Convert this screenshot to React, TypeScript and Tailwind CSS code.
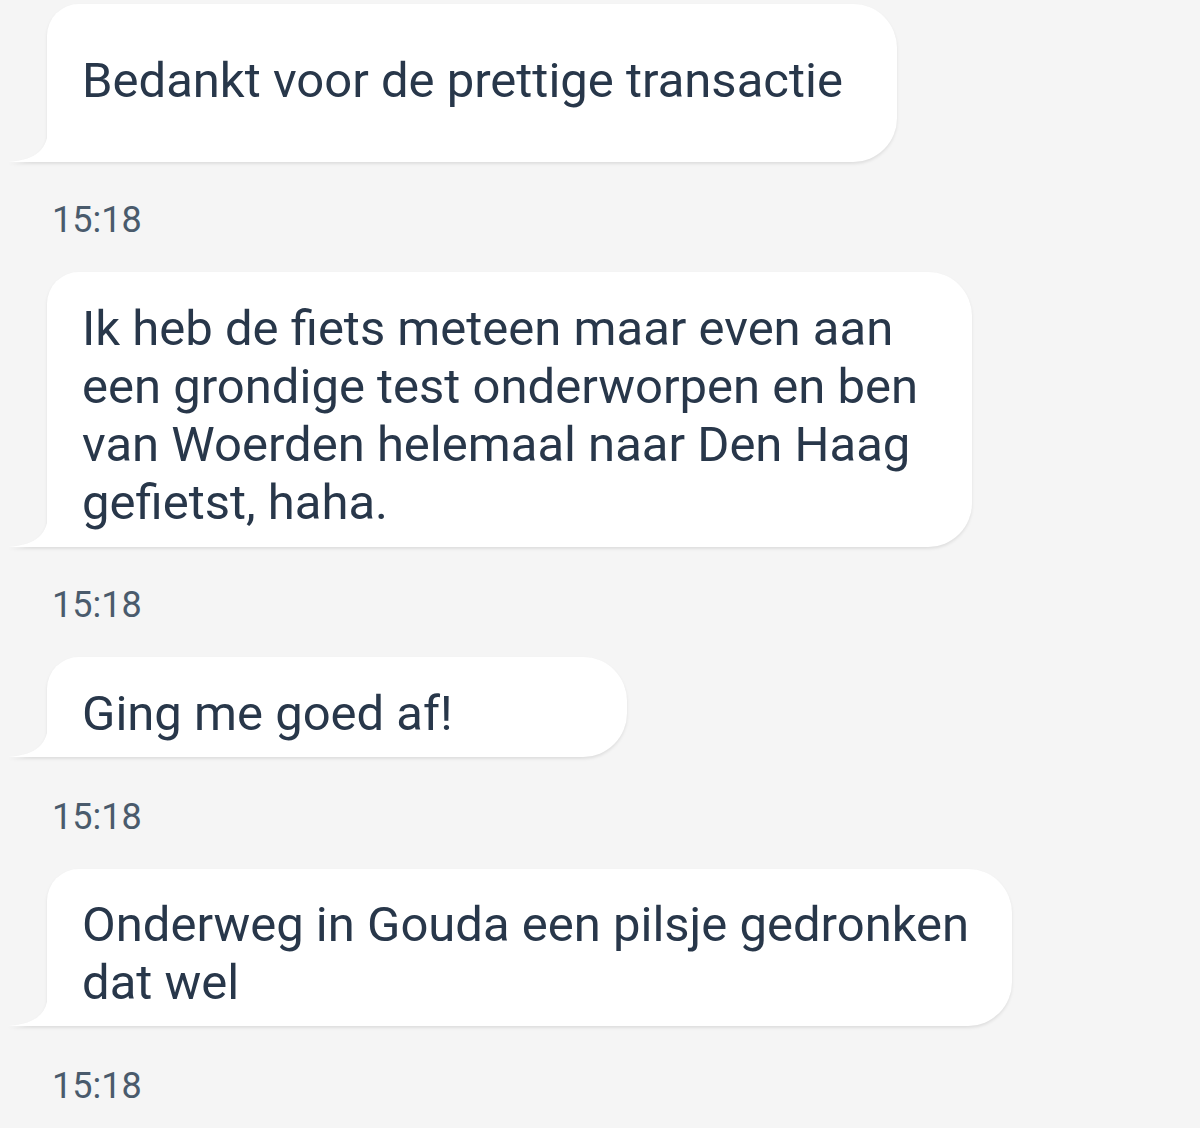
import React from 'react';

type Msg = {
  lines: string[];
  width: string;
  pad: string;
  gap: string;
};

const messages: Msg[] = [
  { lines: ['Bedankt voor de prettige transactie'], width: 'w-[850px]', pad: 'pt-[48px] pb-[52px]', gap: 'mt-[40px]' },
  {
    lines: [
      'Ik heb de fiets meteen maar even aan',
      'een grondige test onderworpen en ben',
      'van Woerden helemaal naar Den Haag',
      'gefietst, haha.',
    ],
    width: 'w-[925px]',
    pad: 'pt-[28px] pb-[15px]',
    gap: 'mt-[40px]',
  },
  { lines: ['Ging me goed af!'], width: 'w-[580px]', pad: 'pt-[28px] pb-[14px]', gap: 'mt-[42px]' },
  {
    lines: ['Onderweg in Gouda een pilsje gedronken', 'dat wel'],
    width: 'w-[965px]',
    pad: 'pt-[27px] pb-[14px]',
    gap: 'mt-[42px]',
  },
];

const Bubble: React.FC<{ msg: Msg }> = ({ msg }) => (
  <div className="relative ml-[47px] w-fit drop-shadow-[0_2px_1.5px_rgba(0,0,0,0.09)]">
    {/* tail on the bottom-left */}
    <svg
      className="absolute bottom-0 left-[-39px]"
      width="40"
      height="34"
      viewBox="0 0 40 34"
    >
      <path d="M40 0 C40 20 30 32 0 34 L40 34 Z" fill="#ffffff" />
    </svg>
    <div
      className={`${msg.width} ${msg.pad} rounded-tl-[32px] rounded-r-[44px] rounded-bl-none bg-white pl-[35px] pr-[40px] text-[49px] leading-[58px] text-[#28374a]`}
    >
      {msg.lines.map((l, i) => (
        <div key={i} className="whitespace-nowrap">
          {l}
        </div>
      ))}
    </div>
  </div>
);

export default function App() {
  return (
    <div
      className="min-h-[1128px] w-[1200px] bg-[#f5f5f5] pt-[4px]"
      style={{ fontFamily: 'Roboto, "Noto Sans", sans-serif' }}
    >
      {messages.map((m, i) => (
        <div key={i}>
          <Bubble msg={m} />
          <div className={`${m.gap} mb-[34px] pl-[52px] text-[36px] leading-[36px] text-[#4a5b6c]`}>
            15:18
          </div>
        </div>
      ))}
    </div>
  );
}
